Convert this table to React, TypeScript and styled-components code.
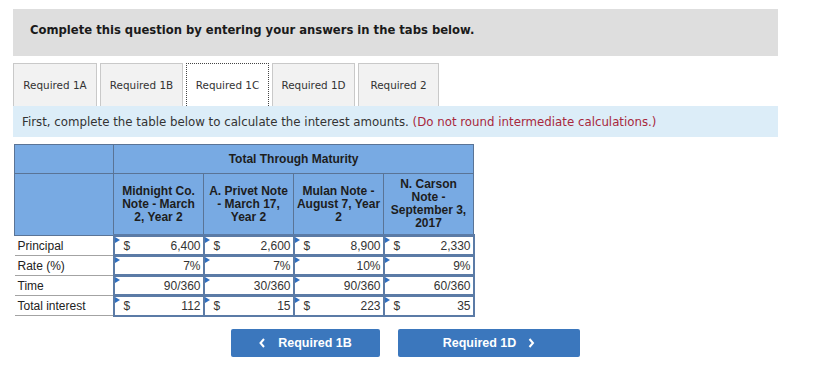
import styled, { createGlobalStyle } from "styled-components"

const GlobalStyle = createGlobalStyle`
    body {
        margin : 0;
        background : white;
        font-family : "DejaVu Sans", Verdana, sans-serif;
        color : #222;
    }
`

type Note = {
    title : string
    principal : string
    rate : string
    time : string
    interest : string
}

// the non-breaking space keeps "- March" on one line
const notes : Note[] = [
    { title : "Midnight Co. Note - March 2, Year 2", principal : "6,400", rate : "7%", time : "90/360", interest : "112" },
    { title : "A. Privet Note -\u00a0March 17, Year 2", principal : "2,600", rate : "7%", time : "30/360", interest : "15" },
    { title : "Mulan Note - August 7, Year 2", principal : "8,900", rate : "10%", time : "90/360", interest : "223" },
    { title : "N. Carson Note - September 3, 2017", principal : "2,330", rate : "9%", time : "60/360", interest : "35" },
]

const tabs = [
    { label : "Required 1A", width : 84 },
    { label : "Required 1B", width : 83 },
    { label : "Required 1C", width : 83 },
    { label : "Required 1D", width : 83 },
    { label : "Required 2", width : 81 },
]

function Chevron({ dir }: { dir : "left" | "right" }) {
    const points = dir === "left" ? "5,1 1.5,5 5,9" : "1.5,1 5,5 1.5,9"
    return (
        <svg width="7" height="10" viewBox="0 0 7 10">
            <polyline points={points} fill="none" stroke="white" strokeWidth="2" />
        </svg>
    )
}

function ValueCell({ value, dollar }: { value : string, dollar? : boolean }) {
    return (
        <InputTd>
            <CellInner>
                <span>{dollar ? "$" : ""}</span>
                <span>{value}</span>
            </CellInner>
        </InputTd>
    )
}

function App() {
    return (
        <Page>
            <GlobalStyle />
            <QuestionBar>Complete this question by entering your answers in the tabs below.</QuestionBar>
            <TabRow>
                {tabs.map(t => (
                    <Tab key={t.label} $width={t.width} $active={t.label === "Required 1C"}>{t.label}</Tab>
                ))}
            </TabRow>
            <Instructions>
                First, complete the table below to calculate the interest amounts. <Warn>(Do not round intermediate calculations.)</Warn>
            </Instructions>
            <InterestTable>
                <colgroup>
                    <Col $width={99} />
                    {notes.map(n => <Col key={n.title} $width={90} />)}
                </colgroup>
                <thead>
                    <tr>
                        <HeadTh></HeadTh>
                        <HeadTh colSpan={4}>Total Through Maturity</HeadTh>
                    </tr>
                    <tr>
                        <HeadTh $tall></HeadTh>
                        {notes.map(n => (
                            <HeadTh key={n.title} $tall>{n.title}</HeadTh>
                        ))}
                    </tr>
                </thead>
                <tbody>
                    <tr>
                        <LabelTd>Principal</LabelTd>
                        {notes.map(n => <ValueCell key={n.title} value={n.principal} dollar />)}
                    </tr>
                    <tr>
                        <LabelTd>Rate (%)</LabelTd>
                        {notes.map(n => <ValueCell key={n.title} value={n.rate} />)}
                    </tr>
                    <tr>
                        <LabelTd>Time</LabelTd>
                        {notes.map(n => <ValueCell key={n.title} value={n.time} />)}
                    </tr>
                    <tr>
                        <LabelTd>Total interest</LabelTd>
                        {notes.map(n => <ValueCell key={n.title} value={n.interest} dollar />)}
                    </tr>
                </tbody>
            </InterestTable>
            <NavRow>
                <NavButton $width={149}>
                    <Chevron dir="left" />
                    <span>Required 1B</span>
                </NavButton>
                <NavButton $width={182}>
                    <span>Required 1D</span>
                    <Chevron dir="right" />
                </NavButton>
            </NavRow>
        </Page>
    )
}

export default App


const Page = styled.div`
    width : 819px;
    height : 383px;
    padding : 9px 0 0 13px;
    box-sizing : border-box;
    overflow : hidden;
`

const QuestionBar = styled.div`
    width : 765px;
    height : 47px;
    box-sizing : border-box;
    padding : 14px 17px;
    background : #dedede;
    font-size : 11.6px;
    font-weight : 700;
    color : #1a1a1a;
`

const TabRow = styled.div`
    display : flex;
    gap : 3px;
    margin-top : 7px;
`

const Tab = styled.div<{ $active? : boolean, $width : number }>`
    width : ${p => p.$width}px;
    height : 43px;
    box-sizing : border-box;
    display : flex;
    align-items : center;
    justify-content : center;
    font-size : 10.4px;
    color : #333;
    white-space : nowrap;
    background : ${p => p.$active ? "white" : "#f2f2f2"};
    border : ${p => p.$active ? "1px dotted #444" : "1px solid #c9c9c9"};
    border-bottom : none;
`

const Instructions = styled.div`
    width : 765px;
    height : 31px;
    box-sizing : border-box;
    padding : 0 9px;
    display : flex;
    align-items : center;
    background : #dcedf8;
    font-size : 11.8px;
    color : #333;
    white-space : pre;
`

const Warn = styled.span`
    color : #a8283c;
`

const InterestTable = styled.table`
    width : 459px;
    margin : 7px 0 0 1px;
    table-layout : fixed;
    border-collapse : collapse;
    font-family : "Liberation Sans", Arial, sans-serif;
    font-size : 12px;
    color : #222;
`

const Col = styled.col<{ $width : number }>`
    width : ${p => p.$width}px;
`

const HeadTh = styled.th<{ $tall? : boolean }>`
    background : #78aae3;
    border : 1px solid #5a7496;
    height : ${p => p.$tall ? "60px" : "28px"};
    padding : 0 2px;
    font-weight : 700;
    font-size : 12px;
    line-height : 13px;
    color : #1d1d1d;
    text-align : center;
`

const LabelTd = styled.td`
    height : 17px;
    padding : 1px 3px;
    border-bottom : 1px solid #a3a3a3;
    border-right : 2px solid #5b7ba6;
    white-space : nowrap;
`

const InputTd = styled.td`
    position : relative;
    height : 17px;
    padding : 0;
    border : 2px solid #5b7ba6;
    border-top-width : 3px;
    background : white;
    &::before {
        content : "";
        position : absolute;
        top : 0;
        left : 0;
        border-style : solid;
        border-width : 3px 0 3px 5px;
        border-color : transparent transparent transparent #2f6fc0;
    }
`

const CellInner = styled.div`
    display : flex;
    justify-content : space-between;
    padding : 1px 2px 0 9px;
    color : #333;
`

const NavRow = styled.div`
    display : flex;
    gap : 18px;
    margin : 12px 0 0 218px;
`

const NavButton = styled.div<{ $width : number }>`
    width : ${p => p.$width}px;
    height : 28px;
    display : flex;
    align-items : center;
    justify-content : center;
    gap : 12px;
    background : #3b77bd;
    border-radius : 2px;
    color : white;
    font-family : "Liberation Sans", Arial, sans-serif;
    font-size : 12.5px;
    font-weight : 700;
`
